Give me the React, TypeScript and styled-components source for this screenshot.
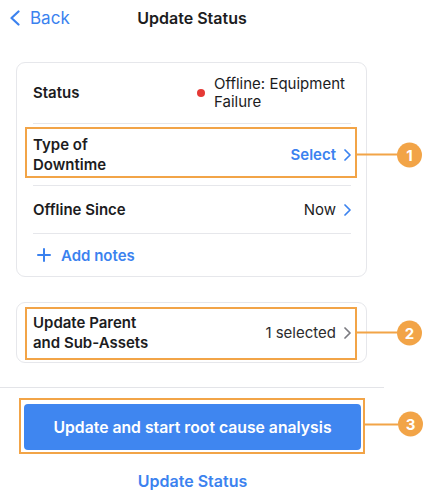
import styled, { createGlobalStyle } from 'styled-components';

const GlobalStyle = createGlobalStyle`
  html, body {
    margin: 0;
    padding: 0;
    background: #fff;
  }
  body {
    font-family: Inter, "Liberation Sans", sans-serif;
    color: #1c1c1e;
    -webkit-font-smoothing: antialiased;
  }
`;

const BLUE = '#3b82ef';
const ORANGE = '#f2a447';

const Screen = styled.div`
  width: 384px;
  display: flex;
  flex-direction: column;
`;

const Header = styled.header`
  height: 35px;
  display: grid;
  grid-template-columns: 1fr auto 1fr;
  align-items: center;
`;

const BackButton = styled.button`
  justify-self: start;
  display: flex;
  align-items: center;
  gap: 10px;
  padding: 0 0 0 9px;
  border: none;
  background: none;
  color: ${BLUE};
  font-family: inherit;
  font-size: 17px;
  cursor: pointer;
`;

const Title = styled.h1`
  margin: 0;
  font-size: 16px;
  font-weight: 600;
`;

const Content = styled.main`
  display: flex;
  flex-direction: column;
  gap: 25px;
  padding: 27px 17px 0 16px;
`;

const Card = styled.section`
  border: 1px solid #e6e7eb;
  border-radius: 9px;
  padding: 0 15px 0 16px;
  display: flex;
  flex-direction: column;
`;

const Row = styled.div<{ $h: number; $last?: boolean }>`
  position: relative;
  height: ${(p) => p.$h}px;
  box-sizing: border-box;
  display: flex;
  align-items: center;
  justify-content: space-between;
  gap: 12px;
  border-bottom: ${(p) => (p.$last ? 'none' : '1px solid #e6e7eb')};
`;

const Highlight = styled.div<{ $top: number; $bottom: number }>`
  position: absolute;
  left: -8px;
  right: -6px;
  top: ${(p) => p.$top}px;
  bottom: ${(p) => p.$bottom}px;
  border: 2px solid ${ORANGE};
  pointer-events: none;
`;

const Callout = styled.div`
  position: absolute;
  left: calc(100% + 4px);
  top: 50%;
  transform: translateY(-50%);
  display: flex;
  align-items: center;
`;

const CalloutLine = styled.span<{ $w?: number }>`
  width: ${(p) => p.$w ?? 42}px;
  height: 2px;
  background: ${ORANGE};
`;

const Badge = styled.span`
  width: 25px;
  height: 25px;
  border-radius: 50%;
  background: ${ORANGE};
  color: #fff;
  font-size: 15px;
  font-weight: 700;
  display: flex;
  align-items: center;
  justify-content: center;
`;

const Label = styled.div<{ $wide?: boolean }>`
  font-size: 15px;
  font-weight: 600;
  line-height: 20px;
  width: ${(p) => (p.$wide ? 'auto' : '130px')};
`;

const Value = styled.div<{ $tone?: 'blue' | 'dark' | 'gray'; $bold?: boolean }>`
  display: flex;
  align-items: center;
  gap: 8px;
  font-size: 15px;
  line-height: 19px;
  font-weight: ${(p) => (p.$bold ? 600 : 400)};
  color: ${(p) => (p.$tone === 'blue' ? BLUE : p.$tone === 'gray' ? '#2c2c2e' : '#1c1c1e')};
`;

const StatusValue = styled.div`
  display: flex;
  align-items: center;
  gap: 9px;
  font-size: 15px;
  line-height: 18px;
  width: 150px;
  margin-right: 4px;
`;

const Dot = styled.span`
  flex: none;
  width: 8px;
  height: 8px;
  border-radius: 50%;
  background: #e53935;
`;

const AddNotes = styled.button`
  display: flex;
  align-items: center;
  gap: 10px;
  padding: 0 0 0 4px;
  border: none;
  background: none;
  color: ${BLUE};
  font-family: inherit;
  font-size: 15px;
  font-weight: 600;
  cursor: pointer;
`;

const Divider = styled.hr`
  margin: 24px 0 0;
  border: none;
  height: 1px;
  background: #e3e4e8;
`;

const Footer = styled.div`
  display: flex;
  flex-direction: column;
  align-items: center;
  padding: 10px 23px 0 24px;
`;

const PrimaryWrap = styled.div`
  position: relative;
  width: 100%;
  padding-top: 6px;
  box-sizing: border-box;
`;

const PrimaryButton = styled.button`
  display: block;
  width: 100%;
  height: 46px;
  border: none;
  border-radius: 4px;
  background: #3f86f0;
  color: #fff;
  font-family: inherit;
  font-size: 15.75px;
  font-weight: 600;
  cursor: pointer;
`;

const ButtonHighlight = styled.div`
  position: absolute;
  left: -5px;
  right: -4px;
  top: 0;
  bottom: -4px;
  border: 2px solid ${ORANGE};
  pointer-events: none;
`;

const LinkButton = styled.button`
  margin-top: 20px;
  border: none;
  background: none;
  color: ${BLUE};
  font-family: inherit;
  font-size: 16px;
  font-weight: 600;
  cursor: pointer;
`;

const Chevron = ({ color = BLUE }: { color?: string }) => (
  <svg width="7" height="12" viewBox="0 0 7 12" fill="none">
    <path d="M1 1l5 5-5 5" stroke={color} strokeWidth="1.7" strokeLinecap="round" strokeLinejoin="round" />
  </svg>
);

const Step = ({ n, line }: { n: number; line?: number }) => (
  <Callout>
    <CalloutLine $w={line} />
    <Badge>{n}</Badge>
  </Callout>
);

export default function App() {
  return (
    <>
      <GlobalStyle />
      <Screen>
        <Header>
          <BackButton>
            <svg width="11" height="16" viewBox="0 0 11 16" fill="none">
              <path d="M9.5 1.5L2.5 8l7 6.5" stroke={BLUE} strokeWidth="2.2" strokeLinecap="round" strokeLinejoin="round" />
            </svg>
            Back
          </BackButton>
          <Title>Update Status</Title>
          <span />
        </Header>

        <Content>
          <Card>
            <Row $h={61}>
              <Label>Status</Label>
              <StatusValue>
                <Dot />
                <span>Offline: Equipment Failure</span>
              </StatusValue>
            </Row>
            <Row $h={62}>
              <Highlight $top={3} $bottom={7} />
              <Label>Type of Downtime</Label>
              <Value $tone="blue" $bold>
                Select
                <Chevron />
              </Value>
              <Step n={1} />
            </Row>
            <Row $h={48}>
              <Label $wide>Offline Since</Label>
              <Value>
                Now
                <Chevron />
              </Value>
            </Row>
            <Row $h={42} $last>
              <AddNotes>
                <svg width="14" height="14" viewBox="0 0 14 14">
                  <path d="M7 1v12M1 7h12" stroke={BLUE} strokeWidth="2" strokeLinecap="round" />
                </svg>
                Add notes
              </AddNotes>
            </Row>
          </Card>

          <Card>
            <Row $h={59} $last>
              <Highlight $top={4} $bottom={2} />
              <Label>Update Parent and Sub-Assets</Label>
              <Value $tone="gray">
                1 selected
                <Chevron color="#7b7b80" />
              </Value>
              <Step n={2} />
            </Row>
          </Card>
        </Content>

        <Divider />

        <Footer>
          <PrimaryWrap>
            <ButtonHighlight />
            <PrimaryButton>Update and start root cause analysis</PrimaryButton>
            <Step n={3} line={33} />
          </PrimaryWrap>
          <LinkButton>Update Status</LinkButton>
        </Footer>
      </Screen>
    </>
  );
}
